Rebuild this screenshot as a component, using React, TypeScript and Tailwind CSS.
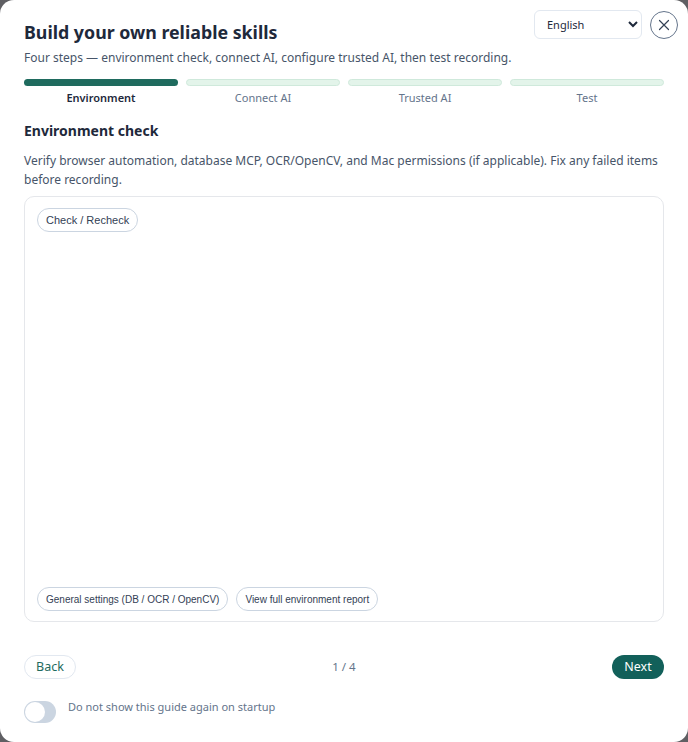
import React, { useState } from "react";

const steps = ["Environment", "Connect AI", "Trusted AI", "Test"];

export default function App(): JSX.Element {
  const [step] = useState(0);
  const [hideOnStartup, setHideOnStartup] = useState(false);
  const [lang, setLang] = useState("en");

  return (
    <div className="h-[742px] w-[688px] bg-[#5f5f63] font-['Noto_Sans',sans-serif]">
      <div className="relative flex h-full w-full flex-col rounded-[14px] bg-white px-6 pt-[18px]">
        {/* header controls */}
        <div className="absolute right-[10px] top-[10px] flex items-center gap-2">
          <select
            value={lang}
            onChange={(e) => setLang(e.target.value)}
            className="h-[29px] w-[108px] rounded-md border border-[#e2e8f0] bg-white pl-2 pr-1 text-[11px] text-[#1e293b] font-['Noto_Sans',sans-serif]"
          >
            <option value="en">English</option>
            <option value="zh">中文</option>
          </select>
          <button
            type="button"
            className="flex h-[28px] w-[28px] items-center justify-center rounded-full border border-[#64748b] text-[#334155]"
          >
            <svg width="12" height="12" viewBox="0 0 12 12" fill="none">
              <path d="M1.5 1.5l9 9M10.5 1.5l-9 9" stroke="currentColor" strokeWidth="1.2" strokeLinecap="round" />
            </svg>
          </button>
        </div>

        <h1 className="text-[17.8px] font-bold leading-[28px] text-[#1e293b]">
          Build your own reliable skills
        </h1>
        <p className="mt-[3px] text-[12px] leading-[18px] text-[#475569]">
          Four steps — environment check, connect AI, configure trusted AI, then test recording.
        </p>

        {/* stepper */}
        <div className="mt-[12px] grid grid-cols-4 gap-2">
          {steps.map((s, i) => (
            <div key={s} className="flex flex-col items-center">
              <div
                className={
                  i === step
                    ? "h-[7px] w-full rounded-full bg-[#1f6b5e]"
                    : "h-[7px] w-full rounded-full border border-[#cfe9db] bg-[#e3f4ea]"
                }
              />
              <span
                className={
                  i === step
                    ? "mt-[4px] text-[11px] font-semibold leading-[16px] text-[#1e293b]"
                    : "mt-[4px] text-[11px] leading-[16px] text-[#64748b]"
                }
              >
                {s}
              </span>
            </div>
          ))}
        </div>

        <h2 className="mt-[15px] text-[14px] font-bold leading-[20px] text-[#1e293b]">
          Environment check
        </h2>
        <p className="mt-[10px] text-[12px] leading-[19px] text-[#475569]">
          Verify browser automation, database MCP, OCR/OpenCV, and Mac permissions (if applicable). Fix any failed items
          before recording.
        </p>

        {/* check panel */}
        <div className="mt-[7px] flex h-[426px] flex-col justify-between rounded-[10px] border border-[#e5e7eb] px-3 pb-[10px] pt-[9px]">
          <div>
            <button
              type="button"
              className="h-[24px] rounded-full border border-[#cbd5e1] px-2 text-[11px] text-[#334155] font-['Liberation_Sans',Arial,sans-serif]"
            >
              Check / Recheck
            </button>
          </div>
          <div className="flex gap-2">
            <button
              type="button"
              className="h-[24px] rounded-full border border-[#cbd5e1] px-2 text-[10px] text-[#334155] font-['Liberation_Sans',Arial,sans-serif]"
            >
              General settings (DB / OCR / OpenCV)
            </button>
            <button
              type="button"
              className="h-[24px] rounded-full border border-[#cbd5e1] px-2 text-[10px] text-[#334155] font-['Liberation_Sans',Arial,sans-serif]"
            >
              View full environment report
            </button>
          </div>
        </div>

        {/* navigation */}
        <div className="mt-[33px] flex items-center justify-between">
          <button
            type="button"
            className="h-[24px] w-[52px] rounded-full border border-[#e2e8f0] text-[12.5px] text-[#1f6b5e]"
          >
            Back
          </button>
          <span className="text-[11.5px] text-[#64748b]">1 / 4</span>
          <button
            type="button"
            className="h-[24px] w-[52px] rounded-full bg-[#12605a] text-[12.5px] text-white"
          >
            Next
          </button>
        </div>

        <label className="mt-[22px] flex cursor-pointer items-start gap-3">
          <button
            type="button"
            onClick={() => setHideOnStartup(!hideOnStartup)}
            className={
              hideOnStartup
                ? "relative h-[22px] w-[32px] rounded-full bg-[#12605a]"
                : "relative h-[22px] w-[32px] rounded-full bg-[#cbd5e1]"
            }
          >
            <span
              className={
                hideOnStartup
                  ? "absolute left-[11px] top-[1px] h-[20px] w-[20px] rounded-full bg-white"
                  : "absolute left-[1px] top-[1px] h-[20px] w-[20px] rounded-full bg-white"
              }
            />
          </button>
          <span className="text-[11px] leading-[12px] text-[#64748b]">Do not show this guide again on startup</span>
        </label>
      </div>
    </div>
  );
}
